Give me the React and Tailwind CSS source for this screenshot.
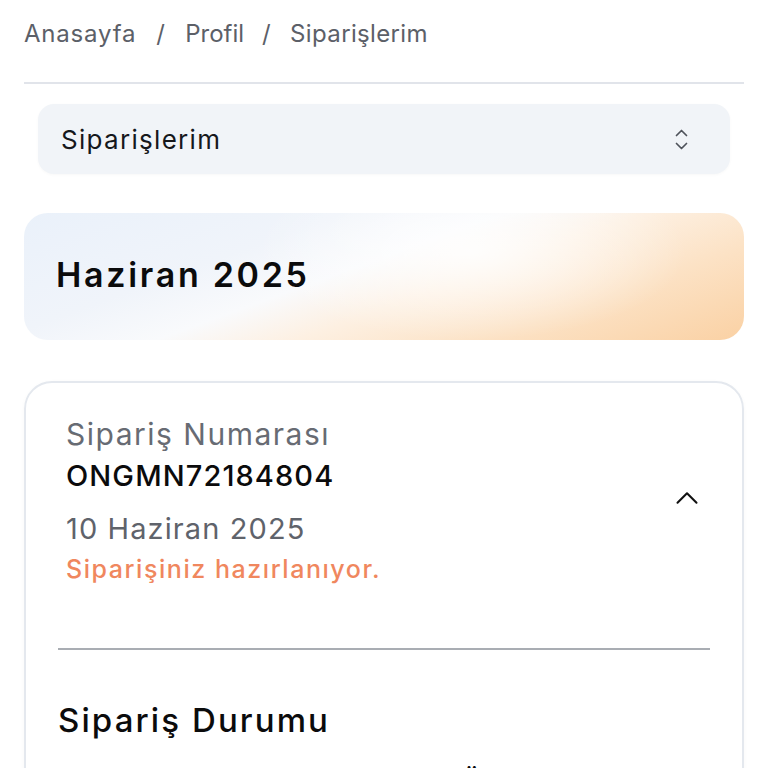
import { ChevronUp } from "lucide-react";

function UpDownIcon() {
  return (
    <svg width="13" height="21" viewBox="0 0 13 21" fill="none" stroke="#4f535b" strokeWidth="1.7" strokeLinecap="round" strokeLinejoin="round">
      <path d="M1.5 6.5 6.5 1.5 11.5 6.5" />
      <path d="M1.5 14.5 6.5 19.5 11.5 14.5" />
    </svg>
  );
}

export default function App() {
  return (
    <div className="h-[768px] overflow-hidden bg-white px-6 font-['Inter',sans-serif]">
      {/* breadcrumb */}
      <nav className="flex items-center gap-[20px] pt-[18px] pb-[32px] text-[24px] leading-[32px] tracking-[0.35px] text-[#5c6068]">
        <span className="tracking-[0.8px]">Anasayfa</span>
        <span>/</span>
        <span className="tracking-[0px]">Profil</span>
        <span className="-ml-[2px]">/</span>
        <span className="-ml-[1px]">Siparişlerim</span>
      </nav>
      <div className="h-[2px] bg-[#e1e4ea]" />

      {/* select */}
      <div className="mx-[14px] mt-[20px] flex h-[70px] items-center justify-between rounded-2xl bg-[#f1f4f8] pl-[23px] pr-[42px] shadow-[0_1px_3px_rgba(0,0,0,0.03)]">
        <span className="text-[26px] tracking-[1.3px] text-[#16181c]">Siparişlerim</span>
        <UpDownIcon />
      </div>

      {/* month banner */}
      <div className="mt-[39px] flex h-[127px] items-center rounded-[24px] bg-[radial-gradient(ellipse_30%_70%_at_62%_30%,rgba(255,255,255,0.85)_0%,rgba(255,255,255,0)_100%),linear-gradient(160deg,#eaf1fa_0%,#f0f4fa_30%,#f9fafc_45%,#fdf0e2_58%,#fce2c5_76%,#fad1a4_100%)] px-8 pb-[5px]">
        <h1 className="text-[34px] font-semibold tracking-[2.7px] text-[#0b0b0c]">Haziran 2025</h1>
      </div>

      {/* order card */}
      <div className="mt-[41px] rounded-[28px] border-2 border-[#e4e8ee] px-[32px] pt-[31px] shadow-[0_1px_4px_rgba(0,0,0,0.03)]">
        <div className="flex items-center justify-between">
          <div className="flex flex-col pl-[8px]">
            <span className="text-[30px] leading-[40px] tracking-[1.5px] text-[#676b73]">Sipariş Numarası</span>
            <span className="mt-[2px] text-[29px] leading-[40px] font-medium tracking-[1.1px] text-[#0b0b0c]">ONGMN72184804</span>
            <span className="mt-[13px] text-[29px] leading-[40px] tracking-[1.1px] text-[#5f636b]">10 Haziran 2025</span>
            <span className="mt-[3px] text-[25px] leading-[34px] font-medium tracking-[1.55px] text-[#f0875e]">Siparişiniz hazırlanıyor.</span>
          </div>
          <ChevronUp size={38} strokeWidth={1.3} className="mb-[4px] mr-[4px] text-[#111]" />
        </div>
        <div className="mt-[62px] h-[2px] bg-[#a9adb3]" />
        <h2 className="mt-[48px] text-[33px] leading-[44px] font-medium tracking-[2.1px] text-[#0b0b0c]">Sipariş Durumu</h2>
        <div className="mt-[19px] pl-[404px] text-[26px] leading-[40px] tracking-[1px] text-[#0b0b0c]">
          <span>Ürün (2/4)</span>
        </div>
      </div>
    </div>
  );
}
